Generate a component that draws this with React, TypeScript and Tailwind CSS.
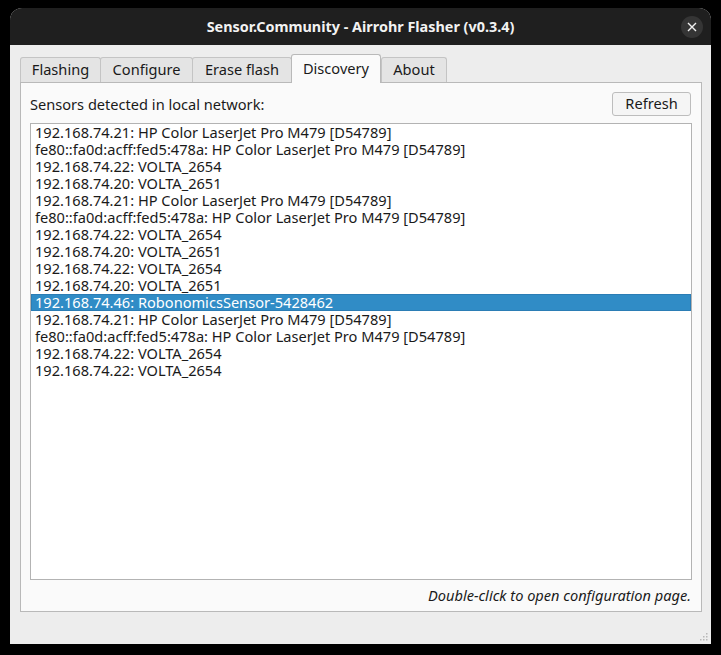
import React from "react";

const SENSORS = [
  "192.168.74.21: HP Color LaserJet Pro M479 [D54789]",
  "fe80::fa0d:acff:fed5:478a: HP Color LaserJet Pro M479 [D54789]",
  "192.168.74.22: VOLTA_2654",
  "192.168.74.20: VOLTA_2651",
  "192.168.74.21: HP Color LaserJet Pro M479 [D54789]",
  "fe80::fa0d:acff:fed5:478a: HP Color LaserJet Pro M479 [D54789]",
  "192.168.74.22: VOLTA_2654",
  "192.168.74.20: VOLTA_2651",
  "192.168.74.22: VOLTA_2654",
  "192.168.74.20: VOLTA_2651",
  "192.168.74.46: RobonomicsSensor-5428462",
  "192.168.74.21: HP Color LaserJet Pro M479 [D54789]",
  "fe80::fa0d:acff:fed5:478a: HP Color LaserJet Pro M479 [D54789]",
  "192.168.74.22: VOLTA_2654",
  "192.168.74.22: VOLTA_2654",
];

const TABS = [
  { label: "Flashing", w: "w-[81px]" },
  { label: "Configure", w: "w-[93px]" },
  { label: "Erase flash", w: "w-[100px]" },
  { label: "Discovery", w: "w-[90px]", active: true },
  { label: "About", w: "w-[66px]" },
];

function ResizeGrip() {
  const dots = [
    [6, 0],
    [3, 3],
    [6, 3],
    [0, 6],
    [3, 6],
    [6, 6],
  ];
  return (
    <svg width="9" height="9" className="absolute bottom-[2px] right-[2px]">
      {dots.map(([x, y], i) => (
        <rect key={i} x={x} y={y} width="1.5" height="1.5" fill="#b8b8b8" />
      ))}
    </svg>
  );
}

export default function App() {
  return (
    <div
      className="h-[655px] w-[721px] bg-black pl-[10px] pt-[8px] text-[14.6px] text-[#1a1a1a]"
      style={{ fontFamily: '"Noto Sans", "Open Sans", sans-serif' }}
    >
      <div className="relative flex h-[636px] w-[701px] flex-col overflow-hidden rounded-t-[12px] bg-[#ededed]">
        {/* title bar */}
        <div className="relative flex h-[37px] shrink-0 items-center justify-center bg-[#1f1f1f]">
          <span className="text-[14.4px] font-bold text-[#f2f2f2]">
            Sensor.Community - Airrohr Flasher (v0.3.4)
          </span>
          <button
            type="button"
            className="absolute right-[8px] top-[8px] flex h-[22px] w-[22px] items-center justify-center rounded-full bg-[#353535]"
          >
            <svg width="10" height="10" viewBox="0 0 10 10">
              <path d="M1 1L9 9M9 1L1 9" stroke="#f0f0f0" strokeWidth="1.4" />
            </svg>
          </button>
        </div>

        {/* tabs */}
        <div className="flex h-[37px] shrink-0 items-end pl-[10px] pt-[9px]">
          {TABS.map((t) =>
            t.active ? (
              <div
                key={t.label}
                className={`relative z-10 -mb-px flex h-[29px] ${t.w} items-center justify-center rounded-t-[3px] border border-b-0 border-[#b9b9b9] bg-[#fafafa]`}
              >
                {t.label}
              </div>
            ) : (
              <div
                key={t.label}
                className={`-mr-px flex h-[25px] ${t.w} items-center justify-center rounded-t-[3px] border border-b-0 border-[#c4c4c4] bg-[#e4e4e4] last:mr-0`}
              >
                {t.label}
              </div>
            )
          )}
        </div>

        {/* pane */}
        <div className="ml-[10px] mr-[9px] flex h-[530px] flex-col border border-[#b9b9b9] bg-[#fafafa] px-[9px] pt-[9px]">
          <div className="flex h-[24px] items-center justify-between">
            <span className="pt-[1px]">Sensors detected in local network:</span>
            <button
              type="button"
              className="mr-[1px] flex h-[24px] w-[79px] items-center justify-center rounded-[3px] border border-[#bdbdbd] bg-[#f5f5f5]"
            >
              Refresh
            </button>
          </div>
          <ul className="mt-[7px] h-[457px] border border-[#b3b3b3] bg-white">
            {SENSORS.map((s, i) =>
              i === 10 ? (
                <li
                  key={i}
                  className="h-[17px] whitespace-nowrap border border-[#2b7db5] bg-[#308cc6] pl-[3px] leading-[15px] text-white"
                >
                  {s}
                </li>
              ) : (
                <li key={i} className="h-[17px] whitespace-nowrap pl-[4px] leading-[17px]">
                  {s}
                </li>
              )
            )}
          </ul>
          <div className="flex h-[31px] items-center justify-end pr-[1px] italic">
            Double-click to open configuration page.
          </div>
        </div>

        <ResizeGrip />
      </div>
    </div>
  );
}
